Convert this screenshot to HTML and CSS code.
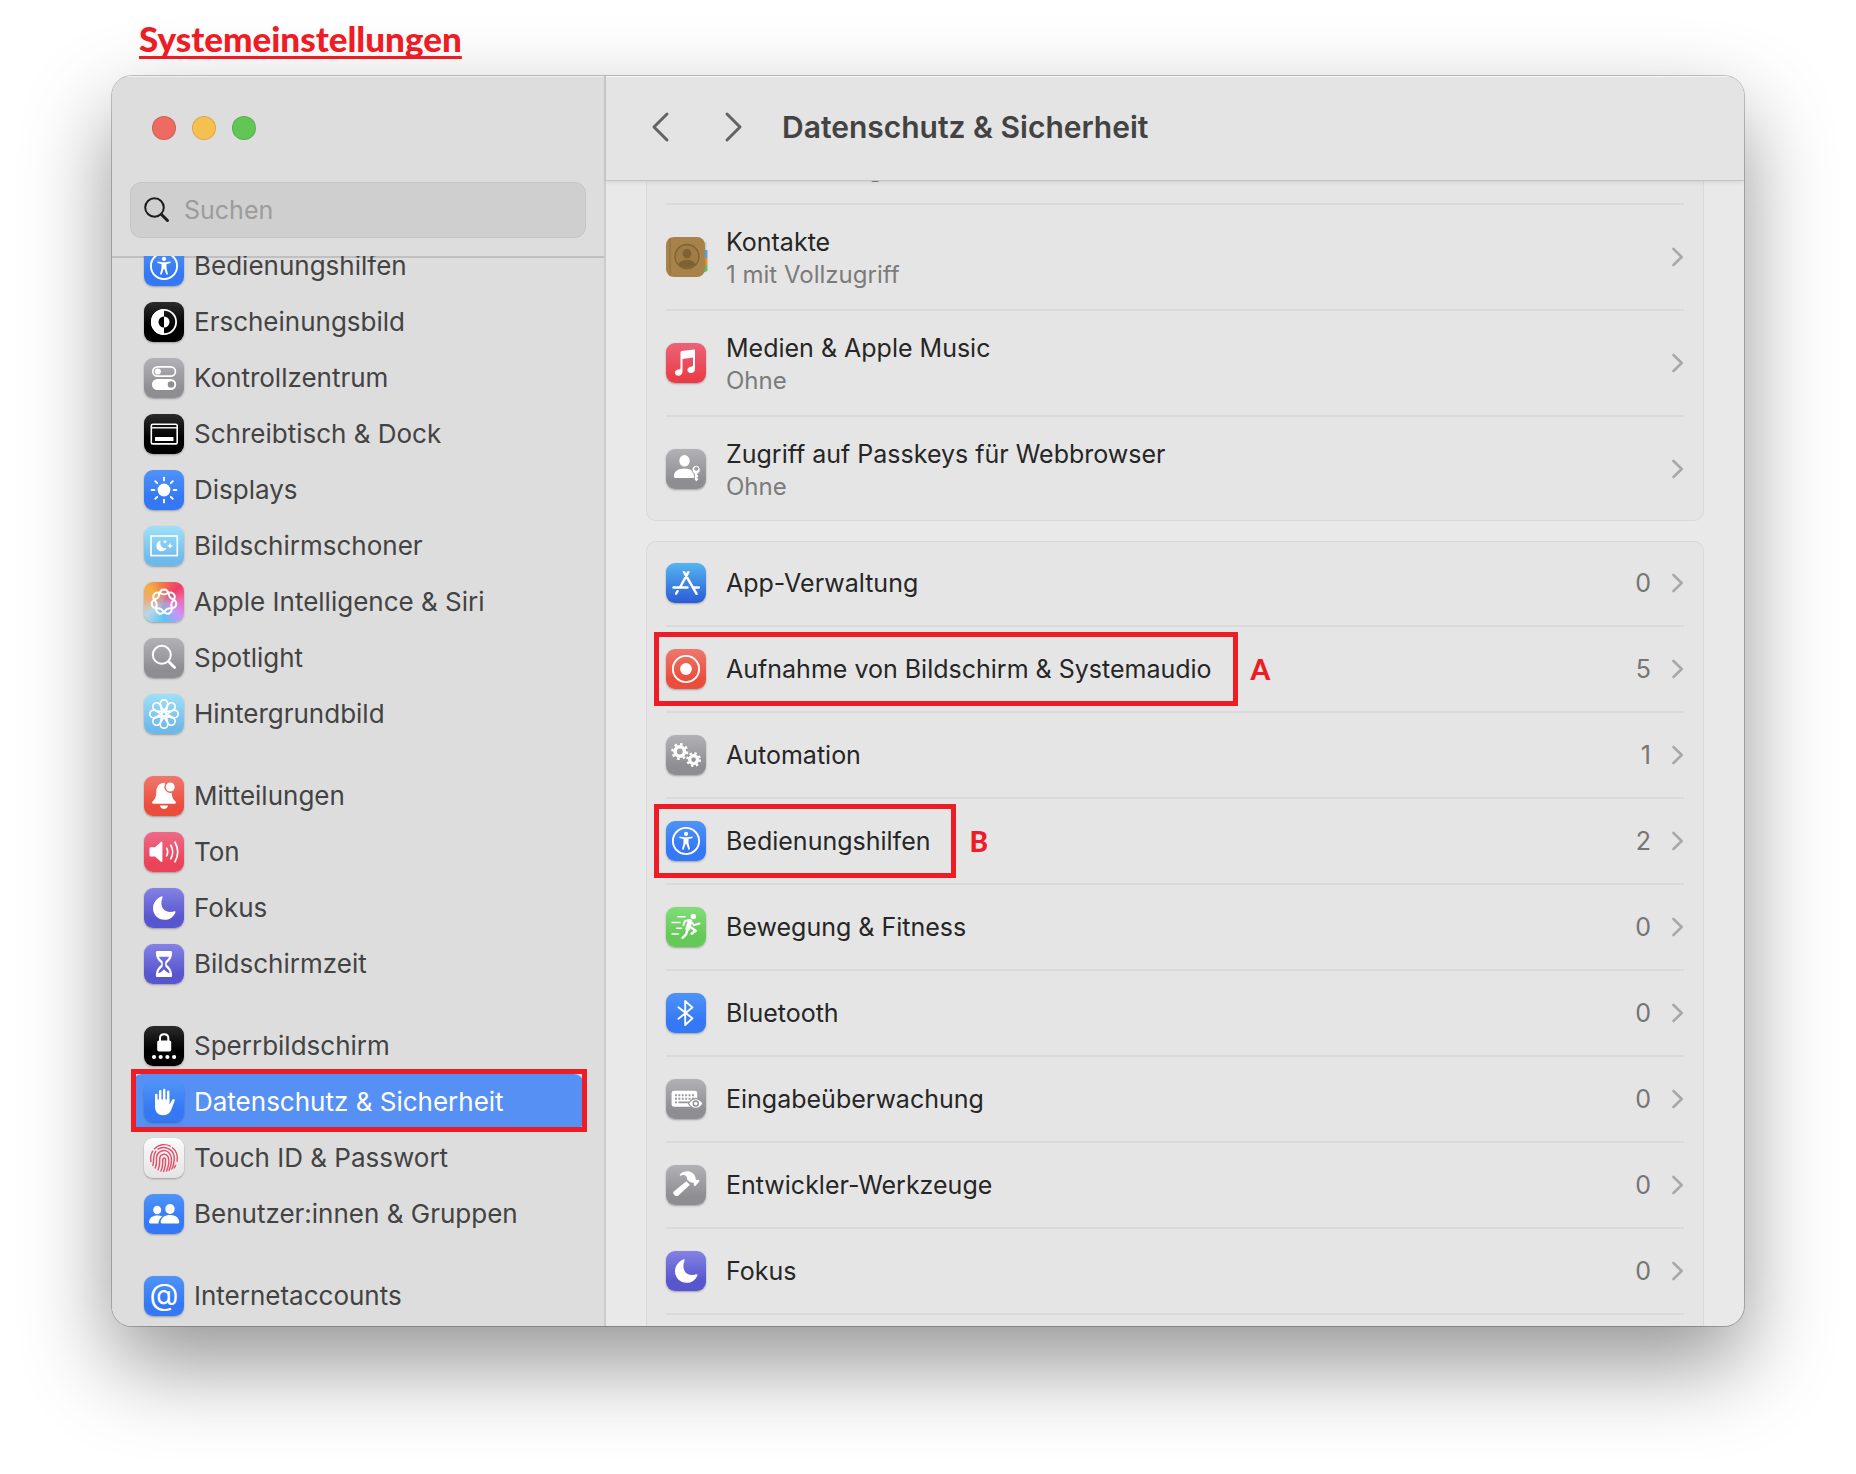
FILE: index.html
```html
<!DOCTYPE html>
<html lang="de">
<head>
<meta charset="utf-8">
<meta name="viewport" content="width=device-width, initial-scale=1">
<title>Systemeinstellungen</title>
<link rel="stylesheet" href="styles.css">
</head>
<body>
<svg class="defs" aria-hidden="true">
  <symbol id="access" viewBox="0 0 40 40">
    <circle cx="20" cy="20" r="13.1" fill="none" stroke="#fff" stroke-width="1.9"/>
    <circle cx="20" cy="12.9" r="2.1" fill="#fff"/>
    <path fill="#fff" d="M13.6 15.4l4.6.8h3.6l4.6-.8.3 1.5-4.2 1.2v3.9l1.5 6.2-1.6.5-2-5.6h-.8l-2 5.6-1.6-.5 1.5-6.2v-3.9l-4.2-1.2z"/>
  </symbol>
  <symbol id="moon" viewBox="0 0 40 40">
    <path fill="#fff" d="M17.2 8.4C13 10 9 14.5 9 20.300 9 26.900 14.100 31.800 20.500 31.800c5 0 9.200-2.900 10.900-7.400.3-.9-.2-1.400-1-1.100-1.200.5-2.600.8-4.100.8-5.300 0-8.900-3.600-8.900-9 0-1.900.4-3.900 1.100-5.300.5-.9-.3-1.800-1.300-1.400z"/>
  </symbol>
  <symbol id="chev" viewBox="0 0 12 20">
    <path d="M1.500 2l8.200 8-8.200 8" fill="none" stroke="#a9a9a9" stroke-width="2.600" stroke-linecap="round" stroke-linejoin="round"/>
  </symbol>
</svg>

<h1 class="caption">Systemeinstellungen</h1>

<main class="window">
  <aside class="sidebar">
    <div class="sidebar-top">
      <div class="lights">
        <button class="light red" aria-label="Schließen"></button>
        <button class="light yellow" aria-label="Minimieren"></button>
        <button class="light green" aria-label="Vollbild"></button>
      </div>
      <label class="search">
        <svg width="28" height="28" viewBox="0 0 28 28" fill="none" stroke="#1d1d1d" stroke-linecap="round"><circle cx="11.500" cy="11.500" r="9.300" stroke-width="2"/><path d="M18.500 18.500l6 6" stroke-width="3"/></svg>
        <input type="search" placeholder="Suchen" aria-label="Suchen">
      </label>
    </div>
    <nav class="nav" aria-label="Einstellungen">
      <ul>
        <li><a href="#"><span class="tile blue"><svg><use href="#access"/></svg></span>Bedienungshilfen</a></li>
        <li><a href="#"><span class="tile black"><svg viewBox="0 0 40 40"><circle cx="20" cy="20" r="12.100" fill="none" stroke="#fff" stroke-width="1.800"/><path d="M20 7a13 13 0 0 0 0 26z" fill="#fff"/><path d="M20 14.500a5.500 5.500 0 0 0 0 11z" fill="#000"/><path d="M20 14.500a5.500 5.500 0 0 1 0 11z" fill="#fff"/></svg></span>Erscheinungsbild</a></li>
        <li><a href="#"><span class="tile gray"><svg viewBox="0 0 40 40"><rect x="8.800" y="8.800" width="22.600" height="9.400" rx="4.700" fill="none" stroke="#fff" stroke-width="1.700"/><circle cx="13.800" cy="13.500" r="3.100" fill="#fff"/><rect x="8" y="21" width="24.200" height="11" rx="5.500" fill="#fff"/><circle cx="27" cy="26.500" r="3.300" fill="#8f8e94"/></svg></span>Kontrollzentrum</a></li>
        <li><a href="#"><span class="tile black"><svg viewBox="0 0 40 40"><rect x="7.300" y="10.300" width="25.900" height="19.600" rx="1.500" fill="none" stroke="#fff" stroke-width="1.600"/><path d="M7 13.800h26" stroke="#fff" stroke-width="1.400"/><rect x="11" y="23" width="18.500" height="4" rx=".6" fill="#fff"/></svg></span>Schreibtisch &amp; Dock</a></li>
        <li><a href="#"><span class="tile blue"><svg viewBox="0 0 40 40"><circle cx="20" cy="20" r="6.400" fill="#fff"/><path d="M20 7.600v2.800M20 29.600v2.800M7.600 20h2.800M29.600 20h2.800M11.200 11.200l2 2M26.800 26.800l2 2M28.800 11.200l-2 2M13.200 26.800l-2 2" stroke="#fff" stroke-width="1.900" stroke-linecap="round"/></svg></span>Displays</a></li>
        <li><a href="#"><span class="tile sky"><svg viewBox="0 0 40 40"><rect x="7" y="10" width="26.300" height="19.600" fill="none" stroke="#fff" stroke-width="1.600"/><path fill="#fff" d="M16.600 14.400c-2.600.8-4.200 2.900-4.200 5.500 0 3 2.300 5.400 5.400 5.400 2.200 0 4-1.200 4.900-3.200-4 .9-7.500-2.800-6.100-7.700zM21 13.500l.7 1.600 1.600.7-1.600.7-.7 1.600-.7-1.600-1.600-.7 1.600-.7zM26 16.800l.9 2.200 2.200.9-2.200.9-.9 2.200-.9-2.200-2.200-.9 2.200-.9z"/></svg></span>Bildschirmschoner</a></li>
        <li><a href="#"><span class="tile siri"><svg viewBox="-20 -20 40 40" fill="none" stroke="#fff" stroke-width="2">
          <path id="lobe" d="M-5.900-4.700C-3.900-7.300-5.500-12.500 0-12.500S3.900-7.300 5.900-4.700"/>
          <use href="#lobe" transform="rotate(51.430)"/><use href="#lobe" transform="rotate(102.860)"/><use href="#lobe" transform="rotate(154.290)"/><use href="#lobe" transform="rotate(205.710)"/><use href="#lobe" transform="rotate(257.140)"/><use href="#lobe" transform="rotate(308.570)"/></svg></span>Apple Intelligence &amp; Siri</a></li>
        <li><a href="#"><span class="tile gray"><svg viewBox="0 0 40 40" fill="none" stroke="#fff" stroke-linecap="round"><circle cx="17.800" cy="16.800" r="9" stroke-width="2"/><path d="M24.800 23.800l5.800 5.800" stroke-width="2.800"/></svg></span>Spotlight</a></li>
        <li><a href="#"><span class="tile sky"><svg viewBox="-20 -20 40 40" fill="none" stroke="#fff" stroke-width="1.700">
          <g id="petals"><path id="petal" d="M0-3C-1.500-6-3.800-7.500-3.800-10.400a3.800 3.800 0 0 1 7.600 0C3.800-7.500 1.500-6 0-3z"/><use href="#petal" transform="rotate(90)"/><use href="#petal" transform="rotate(180)"/><use href="#petal" transform="rotate(270)"/></g>
          <use href="#petals" transform="rotate(45)"/><circle r="2.200"/></svg></span>Hintergrundbild</a></li>
      </ul>
      <ul>
        <li><a href="#"><span class="tile red-t"><svg viewBox="0 0 40 40"><path fill="#fff" d="M20.500 6.800c-5.300 0-8 3.800-8.200 8.700-.2 6-1 7.300-3.600 9.800-1.200 1.200-.6 2.500.8 2.500h21c1.400 0 2-1.300.8-2.500-2.300-2.200-3.300-3.800-3.600-8.500a5.900 5.900 0 0 1-6.500-8.800zM16 29.500h8c-.3 2.200-1.900 3.600-4 3.600s-3.700-1.400-4-3.600z"/><circle cx="26.200" cy="11" r="4.500" fill="#fff"/></svg></span>Mitteilungen</a></li>
        <li><a href="#"><span class="tile pink"><svg viewBox="0 0 40 40"><path fill="#fff" d="M5.500 16.500c0-.8.500-1.300 1.300-1.300H11l5.600-5c.9-.8 1.800-.4 1.800.7v18c0 1.100-.9 1.500-1.800.7L11 24.600H6.800c-.8 0-1.300-.5-1.300-1.300z"/><path d="M22.600 16.200c1.300 2.300 1.300 5.300 0 7.600M26.800 13.200c2.400 4 2.400 9.600 0 13.600M31 10.200c3.600 5.900 3.600 13.700 0 19.600" fill="none" stroke="#fff" stroke-width="1.700" stroke-linecap="round"/></svg></span>Ton</a></li>
        <li><a href="#"><span class="tile indigo"><svg><use href="#moon"/></svg></span>Fokus</a></li>
        <li><a href="#"><span class="tile indigo"><svg viewBox="0 0 40 40"><path fill="#fff" fill-rule="evenodd" d="M13.300 7h13.400c.9 0 1.400.6 1.400 1.300 0 5.500-2 7.900-4.600 10.200-1.300 1.100-1.300 1.900 0 3 2.600 2.300 4.600 4.700 4.600 10.200 0 .7-.5 1.300-1.400 1.300H13.300c-.9 0-1.400-.6-1.400-1.300 0-5.500 2-7.900 4.600-10.200 1.300-1.100 1.300-1.900 0-3-2.600-2.300-4.600-4.700-4.600-10.200 0-.7.5-1.300 1.400-1.300zM15 12.800c.6 1.700 1.600 2.700 3 4 1.200 1.100 1.200 5.300 0 6.400-2.200 1.900-3.300 3.500-3.700 6 1.900-.6 3.700-1.700 5-3.300.4-.4.900-.4 1.300 0 1.400 1.600 3.200 2.700 5 3.300-.3-2.500-1.400-4.100-3.600-6-1.200-1.100-1.200-5.300 0-6.400 1.400-1.300 2.400-2.300 3-4z"/></svg></span>Bildschirmzeit</a></li>
      </ul>
      <ul>
        <li><a href="#"><span class="tile black"><svg viewBox="0 0 40 40" fill="#fff"><rect x="13.200" y="14.500" width="14" height="11" rx="1.800"/><path d="M16 15.500v-3.400c0-5 8.300-5 8.300 0v3.400" fill="none" stroke="#fff" stroke-width="2"/><circle cx="10" cy="31" r="2.100"/><circle cx="16.700" cy="31" r="2.100"/><circle cx="23.400" cy="31" r="2.100"/><circle cx="30.100" cy="31" r="2.100"/></svg></span>Sperrbildschirm</a></li>
        <li><a class="selected" href="#" aria-current="page"><span class="tile blue"><svg viewBox="0 0 40 40" fill="none" stroke="#fff" stroke-width="2.500" stroke-linecap="round"><path d="M12.300 20v-7M16.200 19V9.300M20.200 19V8M24.200 19V9.800"/><path d="M11.050 17.500h14.400v5.100l2.700-4.700c1-1.700 3.200-.9 2.500.9-1.200 3.200-2 5.400-3.100 8.200-1.500 4.200-4 6.200-8 6.200-5.500 0-8.500-3-8.500-8.700z" fill="#fff" stroke="none"/></svg></span>Datenschutz &amp; Sicherheit</a></li>
        <li><a href="#"><span class="tile white"><svg viewBox="0 0 40 40" fill="none" stroke="#e2506a" stroke-width="1.450" stroke-linecap="round"><path d="M10.500 10.800a13.300 13.300 0 0 1 15.800-2.700M28.500 9.700c4 3.300 5.400 8 4.600 13.500M7 23.500c-.8-3.900-.1-7.300 1.700-10.300M31.500 27.500c-.4 1-.7 1.600-1.200 2.300M8.800 27.500c2-5.200-.9-9.200 3-14.200M14 11.200c6-4 14.500-.2 16 6.500.7 4.600 0 8.800-2.100 13.300M11.200 30c2.200-4.300 1-7.400 1.300-10.600.4-5.800 7.400-8.800 12-5.200 4.600 4 3.200 12.300.6 18.200M14 31.800c2.300-4.200 1.500-8 1.700-11.500.5-4.400 6.200-5.400 8.300-1.700 1.800 4 .5 9.700-1.500 14.500M17 33c2.200-4.800 1.600-8.600 1.800-11.700.3-2 2.700-1.800 2.800.3.200 4-.4 8.200-2 11.900"/></svg></span>Touch ID &amp; Passwort</a></li>
        <li><a href="#"><span class="tile blue"><svg viewBox="0 0 40 40" fill="#fff"><ellipse cx="13.200" cy="16" rx="4" ry="4.300"/><path d="M5 28c.3-4.500 4-6.600 8.200-6.600 1.900 0 3.500.3 5 1.100-2.200 1.600-3.500 3.900-3.700 6.900H6.400c-.9 0-1.400-.6-1.400-1.400z"/><ellipse cx="26" cy="15" rx="4.700" ry="5"/><path d="M16.600 28c.4-4.500 4.400-7 9.400-7s9 2.500 9.300 7c0 .9-.5 1.400-1.400 1.400H18c-.9 0-1.400-.5-1.400-1.400z"/></svg></span>Benutzer:innen &amp; Gruppen</a></li>
      </ul>
      <ul>
        <li><a href="#"><span class="tile blue at" aria-hidden="true">@</span>Internetaccounts</a></li>
      </ul>
    </nav>
  </aside>

  <section class="pane">
    <header class="toolbar">
      <button class="step" aria-label="Zurück"><svg width="20" height="32" viewBox="0 0 20 32"><path d="M17 3L4 16l13 13" /></svg></button>
      <button class="step" aria-label="Vorwärts"><svg width="20" height="32" viewBox="0 0 20 32"><path d="M3 3l13 13L3 29"/></svg></button>
      <h2>Datenschutz &amp; Sicherheit</h2>
    </header>
    <div class="scroll">
      <div class="content">
        <ul class="card tall">
          <li><a href="#"><span class="tile red-t"></span><span class="text"><b>&nbsp;</b><small>10 mit Vollzugriff</small></span><svg class="chev"><use href="#chev"/></svg></a></li>
          <li><a href="#"><span class="tile contacts"><svg viewBox="0 0 40 40"><path d="M36 5h4.500v9H36z" fill="#c9c9c9"/><path d="M36 13h5.500v8H36z" fill="#4fa5dd"/><path d="M36 21h5.500v7H36z" fill="#ee8a2e"/><path d="M36 28h5.500v6l-5.500 2z" fill="#5fc45f"/><rect width="39" height="40" rx="8" fill="#a7834b"/><path d="M4 1.200v37.600" stroke="#8d6c39" stroke-width="1"/><circle cx="21" cy="19.500" r="12" fill="#a17d45" stroke="#7f6133" stroke-width="1.300"/><ellipse cx="21" cy="16.700" rx="4.200" ry="4.800" fill="#7f6133"/><path d="M12.500 27c2-3 5-4.200 8.500-4.200s6.500 1.200 8.500 4.200a11.500 11.500 0 0 1-17 0z" fill="#7f6133"/></svg></span><span class="text"><b>Kontakte</b><small>1 mit Vollzugriff</small></span><svg class="chev"><use href="#chev"/></svg></a></li>
          <li><a href="#"><span class="tile music"><svg viewBox="0 0 40 40"><path fill="#fff" d="M14.500 9.600c0-.8.400-1.300 1.200-1.500l12.100-1.600c.8-.1 1.200.3 1.200 1v17.900c0 3-1.700 4.600-4.200 4.600-2.100 0-3.400-1.200-3.400-2.900s1.200-2.900 3.100-3.300l1.500-.3c.8-.2 1-.5 1-1.300V14.500l-10.500 1.600v12.100c0 2.900-1.700 4.500-4.200 4.500-2.100 0-3.400-1.200-3.400-2.900s1.200-2.900 3.100-3.300l1.500-.3c.8-.2 1-.5 1-1.300z"/></svg></span><span class="text"><b>Medien &amp; Apple Music</b><small>Ohne</small></span><svg class="chev"><use href="#chev"/></svg></a></li>
          <li><a href="#"><span class="tile gray"><svg viewBox="0 0 40 40"><ellipse cx="18.500" cy="11.800" rx="5.200" ry="5.800" fill="#fff"/><path fill="#fff" d="M7.800 27c.4-4.700 4.700-7.400 10.700-7.400 3.100 0 5.700.7 7.600 2 .2 1.600.9 2.900 2.200 3.900V29H9.500c-1.100 0-1.700-.8-1.700-2z"/><path fill="#fff" fill-rule="evenodd" stroke="#98979c" stroke-width=".9" d="M30.300 16.200a4.500 4.500 0 0 0-1.900 8.500v6l1.900 2 2.500-2.500-1.500-1.500 1.500-1.500-1.200-1.500v-.9a4.500 4.500 0 0 0-1.300-8.600zm0 2a1.500 1.500 0 1 1 0 3.100 1.500 1.500 0 0 1 0-3.100z"/></svg></span><span class="text"><b>Zugriff auf Passkeys für Webbrowser</b><small>Ohne</small></span><svg class="chev"><use href="#chev"/></svg></a></li>
        </ul>
        <ul class="card">
          <li><a href="#"><span class="tile store"><svg viewBox="0 0 40 40" fill="none" stroke="#fff" stroke-width="2.500" stroke-linecap="round"><path d="M22.400 9.200L14.200 24M18 9.200l12.600 21.600M7.500 24.500h14M27.200 24.500h5.600M11.600 28.200l-1.500 2.400"/></svg></span><span class="text"><b>App-Verwaltung</b></span><span class="count">0</span><svg class="chev"><use href="#chev"/></svg></a></li>
          <li><a href="#"><span class="marked"><span class="tile red-t"><svg viewBox="0 0 40 40"><circle cx="20" cy="20" r="13.100" fill="none" stroke="#fff" stroke-width="1.900"/><circle cx="20" cy="20" r="5.900" fill="#fff"/></svg></span><b>Aufnahme von Bildschirm &amp; Systemaudio</b></span><strong class="mark">A</strong><span class="count">5</span><svg class="chev"><use href="#chev"/></svg></a></li>
          <li><a href="#"><span class="tile gray"><svg viewBox="0 0 40 40" fill="none" stroke="#fff"><circle cx="13.800" cy="16.500" r="4.700" stroke-width="3.600"/><circle cx="13.800" cy="16.500" r="7.400" stroke-width="2.300" stroke-dasharray="2.700 3.112"/><circle cx="27.600" cy="24.600" r="3.900" stroke-width="3.200"/><circle cx="27.600" cy="24.600" r="6.300" stroke-width="2.200" stroke-dasharray="2.400 2.548"/></svg></span><span class="text"><b>Automation</b></span><span class="count">1</span><svg class="chev"><use href="#chev"/></svg></a></li>
          <li><a href="#"><span class="marked"><span class="tile blue"><svg><use href="#access"/></svg></span><b>Bedienungshilfen</b></span><strong class="mark">B</strong><span class="count">2</span><svg class="chev"><use href="#chev"/></svg></a></li>
          <li><a href="#"><span class="tile green-t"><svg viewBox="0 0 40 40" fill="none" stroke="#fff" stroke-linecap="round" stroke-linejoin="round"><path d="M12 9.800h7M6 15.600h8M10.500 21.300h5M6 27h6.500" stroke-width="1.500"/><circle cx="27.300" cy="9.500" r="2.700" fill="#fff" stroke="none"/><path d="M24 14.500l-2.400 7.300" stroke-width="4.600"/><path d="M24.500 14l3.500 4.200 5.500-1.700M22.500 13.300l-3.600.6-1.500 4.300" stroke-width="1.900"/><path d="M24.300 20l5.400 3.800-4 3M21.300 23l-1.200 4.300-3.600 3.500" stroke-width="2.400"/></svg></span><span class="text"><b>Bewegung &amp; Fitness</b></span><span class="count">0</span><svg class="chev"><use href="#chev"/></svg></a></li>
          <li><a href="#"><span class="tile blue"><svg viewBox="0 0 40 40"><path d="M12.400 14.300l14 11-7.200 6.700V8l7.200 6.500-14 11.200" fill="none" stroke="#fff" stroke-width="1.900" stroke-linejoin="round" stroke-linecap="round"/></svg></span><span class="text"><b>Bluetooth</b></span><span class="count">0</span><svg class="chev"><use href="#chev"/></svg></a></li>
          <li><a href="#"><span class="tile gray"><svg viewBox="0 0 40 40"><rect x="5.600" y="11.800" width="25.600" height="15.900" rx="2.400" fill="#fff"/><path d="M9 16.300h19M9 19.800h19" stroke="#98979c" stroke-width="1.900" stroke-dasharray="1.900 1.500"/><path d="M9 23.400h2M12.500 23.400H23" stroke="#98979c" stroke-width="1.600"/><path d="M22.500 24.500c4-6.600 10.500-6.600 14.500 0-4 6.600-10.500 6.600-14.500 0z" fill="#fff" stroke="#929197" stroke-width="1.200"/><circle cx="29.800" cy="24.500" r="2.500" fill="#fff" stroke="#929197" stroke-width="1.500"/></svg></span><span class="text"><b>Eingabeüberwachung</b></span><span class="count">0</span><svg class="chev"><use href="#chev"/></svg></a></li>
          <li><a href="#"><span class="tile gray"><svg viewBox="0 0 40 40" fill="#fff"><path d="M20.300 16.300l3.600 3.400-11.800 11c-2 1.700-6-2-4.600-4z"/><path d="M14 9.300c3.300-3.700 9-4.200 12.500-1.200 2.200 1.800 3.200 3.600 3.200 6.200l1.200.9 1.200-.7 1.500 1.500-4.300 5.200-1.700-1.300.4-1.500-1-.9c-1.600.2-2.900-.1-4-1.200l-1.900-1.700c.3-3.100-1.500-4.800-4-4.600-1 .1-1.600.5-2.200.7-.9.300-1.500-.7-.9-1.400z"/></svg></span><span class="text"><b>Entwickler-Werkzeuge</b></span><span class="count">0</span><svg class="chev"><use href="#chev"/></svg></a></li>
          <li><a href="#"><span class="tile indigo"><svg><use href="#moon"/></svg></span><span class="text"><b>Fokus</b></span><span class="count">0</span><svg class="chev"><use href="#chev"/></svg></a></li>
          <li><a href="#"><span class="tile gray"></span></a></li>
        </ul>
      </div>
    </div>
  </section>
</main>
</body>
</html>
```

FILE: styles.css
```css
:root {
  --mark: #ee1c25;
  --ui: "Inter", "Liberation Sans", sans-serif;
  --note: "Lato", "Open Sans", sans-serif;
}

* { box-sizing: border-box; }

body {
  margin: 0;
  min-height: 100vh;
  padding: 0 112px;
  background: #fff;
  font-family: var(--ui);
  font-size: 25px;
  line-height: 32px;
  color: #262626;
  overflow: hidden;
}

ul { margin: 0; padding: 0; list-style: none; }
a { color: inherit; text-decoration: none; }
b { font-weight: 400; }
button { padding: 0; border: 0; background: none; }
.defs { position: absolute; width: 0; height: 0; }

.caption {
  height: 76px;
  margin: 0;
  padding: 18px 27px 0;
  font: 900 35px/40px var(--note);
  color: var(--mark);
  text-decoration: underline;
  text-decoration-thickness: 3px;
  text-underline-offset: 4px;
  text-decoration-skip-ink: none;
}

.window {
  display: grid;
  grid-template-columns: 494px 1fr;
  height: calc(100vh - 224px);
  border-radius: 20px;
  overflow: hidden;
  background: #e9e9e9;
  box-shadow: 0 0 0 1px rgba(0, 0, 0, .22), 0 38px 88px rgba(0, 0, 0, .42);
}

/* Sidebar */
.sidebar {
  display: flex;
  flex-direction: column;
  min-height: 0;
  background: #ddd;
  border-right: 2px solid #cbcbcb;
  box-shadow: inset 0 1px #f0f0f0;
}

.sidebar-top {
  position: relative;
  padding: 40px 18px 18px;
}

.sidebar-top::after {
  content: "";
  position: absolute;
  inset: auto 0 -2px;
  height: 2px;
  background: rgba(0, 0, 0, .13);
}

.lights {
  display: flex;
  gap: 16px;
  padding: 0 22px 42px;
}

.light {
  width: 24px;
  height: 24px;
  border-radius: 50%;
  border: 1px solid rgba(0, 0, 0, .12);
}

.red { background: #ed6b60; }
.yellow { background: #f5c04f; }
.green { background: #62c655; }

.search {
  display: flex;
  align-items: center;
  gap: 13px;
  height: 56px;
  padding: 0 12px;
  background: #cfcfcf;
  border: 1px solid #c5c5c5;
  border-radius: 11px;
}

.search input {
  flex: 1;
  min-width: 0;
  height: 40px;
  padding: 0;
  border: 0;
  outline: 0;
  background: none;
  font: 25px/40px var(--ui);
}

.search input::placeholder { color: #9c9c9c; opacity: 1; }

.nav {
  flex: 1;
  min-height: 0;
  padding: 0 20px;
  overflow: hidden;
  font-size: 26px;
  color: #434343;
}

.nav ul + ul { margin-top: 26px; }
.nav ul:first-child { margin-top: -18px; }

.nav a {
  position: relative;
  display: flex;
  align-items: center;
  gap: 10px;
  height: 56px;
  padding: 0 12px;
  border-radius: 10px;
  white-space: nowrap;
}

.nav .selected { background: #5690f5; color: #fff; }

.nav .selected::after {
  content: "";
  position: absolute;
  inset: -5px -3px -2px -1px;
  border: 5px solid var(--mark);
}

/* Icon tiles */
.tile {
  flex: none;
  width: 40px;
  height: 40px;
  border-radius: 9px;
  box-shadow: 0 1px 2px rgba(0, 0, 0, .3);
}

.tile svg { display: block; width: 40px; height: 40px; overflow: visible; }
.blue { background: linear-gradient(#4f93f7, #3478f6 70%); }
.black { background: linear-gradient(#2b2b2b, #000 60%); }
.gray { background: linear-gradient(#b2b1b6, #8e8d92 80%); }
.sky { background: linear-gradient(#9fe0f9, #6fb9ea 85%); }
.red-t { background: linear-gradient(#ee786d, #eb4d3d 75%); }
.pink { background: linear-gradient(#ee6a88, #eb445a 75%); }
.indigo { background: linear-gradient(#8482e4, #5856ce 75%); }
.white { background: linear-gradient(#fbfbfb, #e4e4e4); }
.green-t { background: linear-gradient(#80dd78, #64c956 75%); }
.music { background: linear-gradient(#ec6279, #e93a42); }
.store { background: linear-gradient(#54b5ef, #2a5bd7); }
.contacts { box-shadow: none; }

.siri {
  background:
    radial-gradient(circle at 50% 50%, rgba(185, 150, 190, .9), transparent 45%),
    conic-gradient(from 0deg, #f07050, #ee3f68 45deg, #ef6aa8 80deg, #c995fb 130deg, #5cc3f5 180deg, #b8d8e8 235deg, #f0a878 280deg, #f0b040 315deg, #f07050);
}

.at {
  color: #fff;
  font-size: 30px;
  line-height: 36px;
  text-align: center;
}

/* Detail pane */
.pane {
  display: flex;
  flex-direction: column;
  min-width: 0;
  min-height: 0;
}

.toolbar {
  position: relative;
  display: flex;
  align-items: center;
  gap: 54px;
  height: 105px;
  padding: 0 44px 2px;
  background: #e4e4e4;
  border-bottom: 1px solid #c3c3c3;
  box-shadow: inset 0 1px #f6f6f6, 0 1px 4px rgba(0, 0, 0, .1);
}

.toolbar h2 {
  margin: 0 0 0 -16px;
  font-size: 30px;
  line-height: 36px;
  font-weight: 600;
  color: #434343;
}

.step { display: flex; }

.step path {
  fill: none;
  stroke: #636363;
  stroke-width: 3;
  stroke-linecap: round;
  stroke-linejoin: round;
}

.scroll {
  flex: 1;
  min-height: 0;
  padding: 0 40px;
  overflow: hidden;
}

.content {
  display: grid;
  gap: 20px;
  margin-top: -82px;
}

.card {
  padding: 0 20px;
  background: #e5e5e5;
  border-radius: 10px;
  box-shadow: inset 0 0 0 1px #d9d9d9;
}

.card li + li { border-top: 2px solid #dadada; }

.card a {
  display: flex;
  align-items: center;
  height: 84px;
}

.tall a { height: 104px; }

.text {
  display: grid;
  margin-left: 20px;
}

.tall .text { padding-top: 4px; }

.text small {
  font-size: 24px;
  line-height: 34px;
  color: #7b7b7b;
}

.count { margin-left: auto; color: #757575; }

.chev {
  flex: none;
  width: 12px;
  height: 20px;
  margin-left: 21px;
}

.text + .chev { margin-left: auto; }

.marked {
  position: relative;
  display: flex;
  align-items: center;
  gap: 20px;
  align-self: stretch;
}

.marked::after {
  content: "";
  position: absolute;
  inset: 5px -26px 5px -12px;
  border: 5px solid var(--mark);
}

.mark {
  margin-left: 39px;
  font: 900 28px/32px var(--note);
  color: var(--mark);
}
```
